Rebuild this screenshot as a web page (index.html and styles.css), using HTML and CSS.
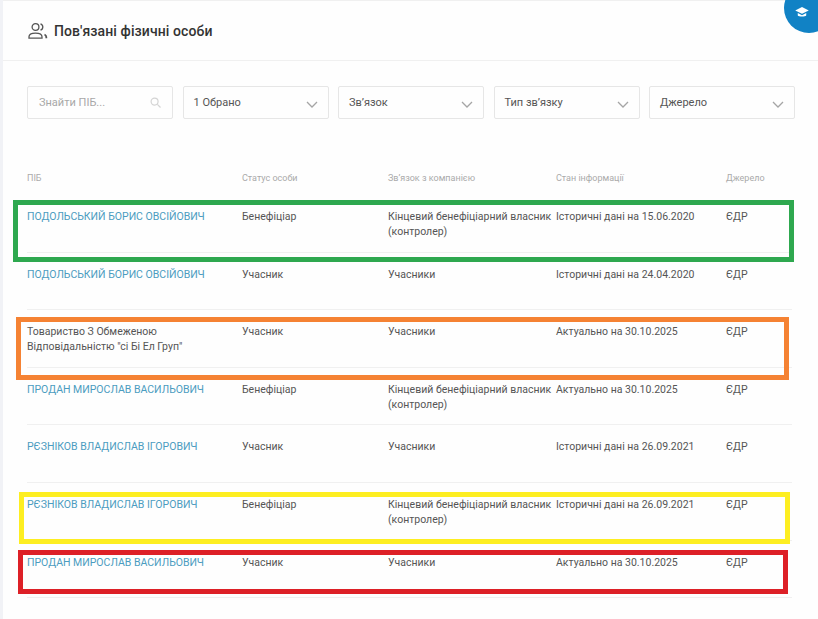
FILE: index.html
```html
<!DOCTYPE html>
<html lang="uk">
<head>
    <meta charset="UTF-8">
    <title>Пов'язані фізичні особи</title>
    <link rel="stylesheet" href="styles.css">
</head>
<body>
    <div class="card">
        <header class="card-head">
            <svg class="head-icon" viewBox="0 0 20 18" width="20" height="18" fill="none" stroke="#555" stroke-width="1.3">
                <circle cx="7.5" cy="5" r="3.4"/>
                <path d="M1 16.2v-1.4c0-2.2 2-3.6 6.5-3.6s6.500 1.400 6.500 3.600v1.400z"/>
                <path d="M12.500 1.800a3.300 3.300 0 0 1 0 6.300"/>
                <path d="M16.500 12.500c1.200.6 1.800 1.400 1.800 2.500v1.200" stroke-width="1.800"/>
            </svg>
            <h1>Пов'язані фізичні особи</h1>
        </header>

        <div class="filters">
            <div class="filter search">
                <span>Знайти ПІБ...</span>
                <svg viewBox="0 0 12 12" width="11" height="11" fill="none" stroke="#d4d4d4" stroke-width="1.300">
                    <circle cx="5" cy="5" r="3.800"/>
                    <path d="M8 8l3.500 3.500"/>
                </svg>
            </div>
            <div class="filter"><span>1 Обрано</span><svg class="chev" viewBox="0 0 12 7" width="12" height="7"><path d="M1 1l5 5 5-5"/></svg></div>
            <div class="filter"><span>Зв’язок</span><svg class="chev" viewBox="0 0 12 7" width="12" height="7"><path d="M1 1l5 5 5-5"/></svg></div>
            <div class="filter"><span>Тип зв’язку</span><svg class="chev" viewBox="0 0 12 7" width="12" height="7"><path d="M1 1l5 5 5-5"/></svg></div>
            <div class="filter"><span>Джерело</span><svg class="chev" viewBox="0 0 12 7" width="12" height="7"><path d="M1 1l5 5 5-5"/></svg></div>
        </div>

        <div class="table">
            <div class="row head-row">
                <div>ПІБ</div>
                <div>Статус особи</div>
                <div>Зв’язок з компанією</div>
                <div>Стан інформації</div>
                <div>Джерело</div>
            </div>
            <div class="row">
                <div class="name">ПОДОЛЬСЬКИЙ БОРИС ОВСІЙОВИЧ</div>
                <div>Бенефіціар</div>
                <div>Кінцевий бенефіціарний власник (контролер)</div>
                <div>Історичні дані на 15.06.2020</div>
                <div>ЄДР</div>
            </div>
            <div class="row">
                <div class="name">ПОДОЛЬСЬКИЙ БОРИС ОВСІЙОВИЧ</div>
                <div>Учасник</div>
                <div>Учасники</div>
                <div>Історичні дані на 24.04.2020</div>
                <div>ЄДР</div>
            </div>
            <div class="row">
                <div>Товариство З Обмеженою Відповідальністю "сі Бі Ел Груп"</div>
                <div>Учасник</div>
                <div>Учасники</div>
                <div>Актуально на 30.10.2025</div>
                <div>ЄДР</div>
            </div>
            <div class="row">
                <div class="name">ПРОДАН МИРОСЛАВ ВАСИЛЬОВИЧ</div>
                <div>Бенефіціар</div>
                <div>Кінцевий бенефіціарний власник (контролер)</div>
                <div>Актуально на 30.10.2025</div>
                <div>ЄДР</div>
            </div>
            <div class="row">
                <div class="name">РЄЗНІКОВ ВЛАДИСЛАВ ІГОРОВИЧ</div>
                <div>Учасник</div>
                <div>Учасники</div>
                <div>Історичні дані на 26.09.2021</div>
                <div>ЄДР</div>
            </div>
            <div class="row">
                <div class="name">РЄЗНІКОВ ВЛАДИСЛАВ ІГОРОВИЧ</div>
                <div>Бенефіціар</div>
                <div>Кінцевий бенефіціарний власник (контролер)</div>
                <div>Історичні дані на 26.09.2021</div>
                <div>ЄДР</div>
            </div>
            <div class="row">
                <div class="name">ПРОДАН МИРОСЛАВ ВАСИЛЬОВИЧ</div>
                <div>Учасник</div>
                <div>Учасники</div>
                <div>Актуально на 30.10.2025</div>
                <div>ЄДР</div>
            </div>
        </div>
    </div>

    <!-- Куточок з іконкою навчання -->
    <div class="edu-badge">
        <svg viewBox="0 0 16 13" width="14" height="11" fill="#fff">
            <path d="M8 0L0 4l8 4 8-4z"/>
            <path d="M3 7.200V10c1.200 1.600 8.800 1.600 10 0V7.200L8 9.700z"/>
        </svg>
    </div>

    <!-- Кольорові рамки поверх таблиці -->
    <div class="mark mark-green"></div>
    <div class="mark mark-orange"></div>
    <div class="mark mark-yellow"></div>
    <div class="mark mark-red"></div>
</body>
</html>
```

FILE: styles.css
```css
* {
    margin: 0;
    padding: 0;
    box-sizing: border-box;
}

body {
    font-family: Roboto, "Liberation Sans", sans-serif;
    background: #f1f2f6;
    color: #444;
    height: 619px;
    overflow: hidden;
    position: relative;
}

.card {
    margin-left: 3px;
    height: 619px;
    background: #fefefe;
    border-top: 1px solid #f0f0f0;
}

.card-head {
    height: 59px;
    padding: 0 0 0 25px;
    display: flex;
    align-items: center;
    gap: 6px;
    border-bottom: 1px solid #f0f0f0;
    box-sizing: content-box;
}

.card-head h1 {
    font-size: 14px;
    font-weight: 500;
    color: #333;
    letter-spacing: 0.1px;
}

.head-icon {
    flex: none;
}

/* Фільтри */
.filters {
    margin: 25px 25px 0 24px;
    display: grid;
    grid-template-columns: repeat(5, 146px);
    column-gap: 9.500px;
}

.filter {
    height: 33px;
    padding: 0 10px;
    display: flex;
    align-items: center;
    justify-content: space-between;
    border: 1px solid #e6e6e6;
    border-radius: 2px;
    font-size: 11px;
    color: #555;
}

.search {
    padding: 0 11px;
    color: #a8a8a8;
}

.chev {
    fill: none;
    stroke: #a5a5a5;
    stroke-width: 1.300;
    margin-top: 3px;
}

/* Таблиця */
.table {
    margin: 52px 0 0 24px;
    width: 765px;
}

.row {
    height: 57.600px;
    padding-top: 14px;
    display: grid;
    grid-template-columns: 215px 146px 168px 170px 66px;
    font-size: 10.500px;
    line-height: 15px;
    color: #555;
    border-bottom: 1px solid #f0f0f0;
}

.row > div:first-child {
    padding-right: 40px;
}

.head-row {
    height: 24px;
    padding-top: 0;
    font-size: 9px;
    line-height: 14px;
    color: #aaa;
    border-bottom: 0;
}

.name {
    color: #4b9cc0;
    white-space: nowrap;
    padding-right: 0 !important;
}

/* Кутовий значок */
.edu-badge {
    position: absolute;
    right: -16px;
    top: -17px;
    width: 50px;
    height: 50px;
    border-radius: 50%;
    background: #1182c5;
}

.edu-badge svg {
    position: absolute;
    left: 11px;
    top: 24px;
}

/* Рамки-позначки */
.mark {
    position: absolute;
    border-style: solid;
    border-width: 5px;
}

.mark-green {
    left: 13px;
    top: 200px;
    width: 781px;
    height: 62px;
    border-color: #2ea84f;
}

.mark-orange {
    left: 16px;
    top: 317px;
    width: 773px;
    height: 63px;
    border-color: #f58233;
}

.mark-yellow {
    left: 19px;
    top: 492px;
    width: 771px;
    height: 52px;
    border-color: #fdee21;
}

.mark-red {
    left: 18px;
    top: 550px;
    width: 770px;
    height: 44px;
    border-color: #dd2027;
}
```
